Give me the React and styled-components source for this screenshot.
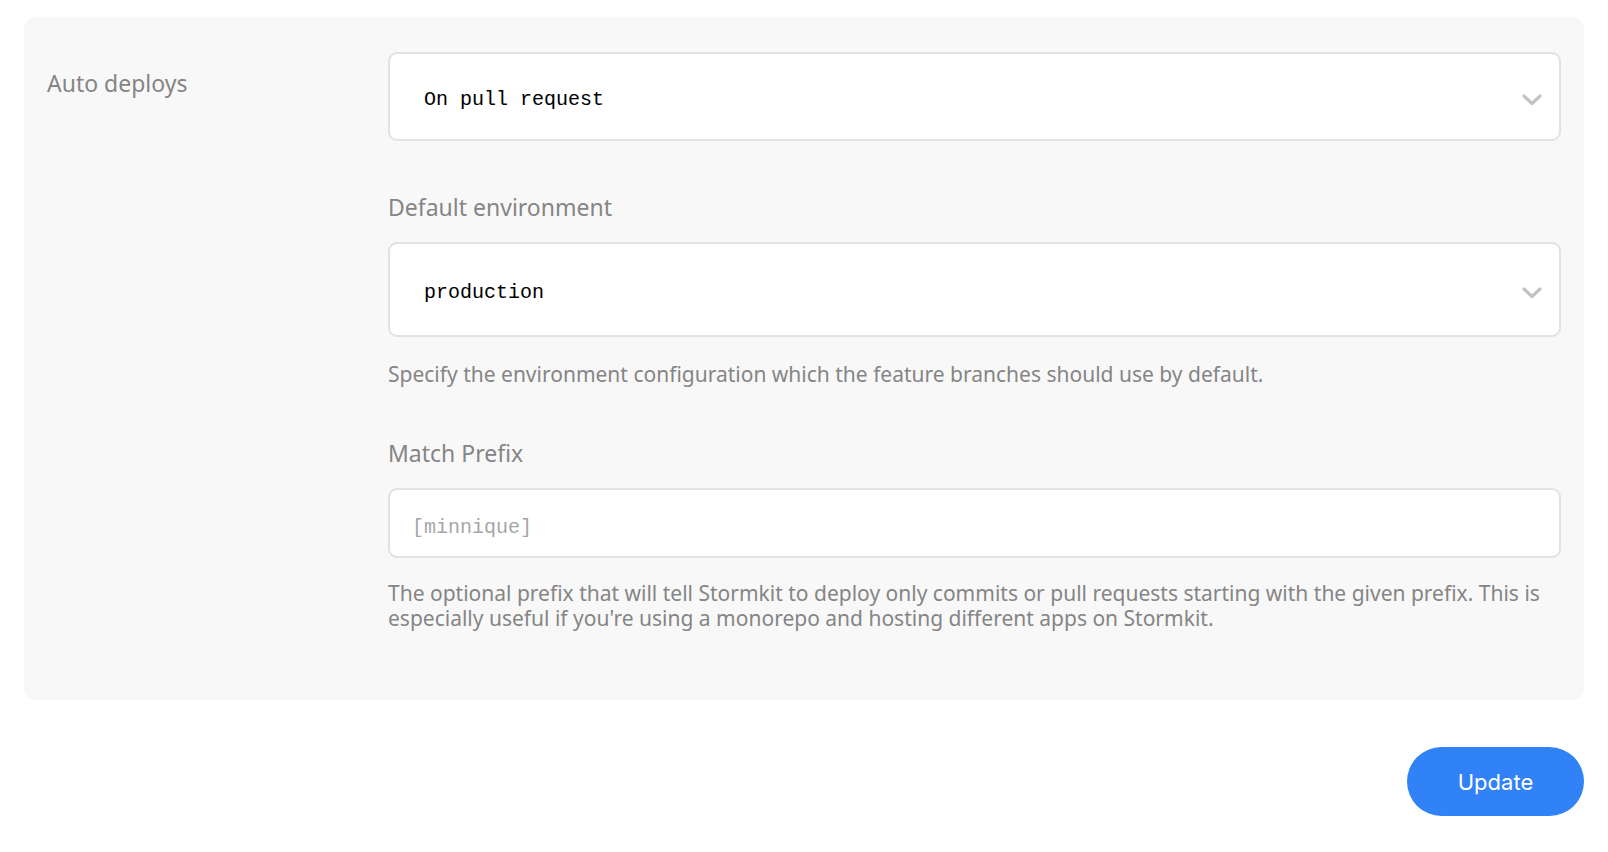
import React from "react";
import styled, { createGlobalStyle } from "styled-components";

const GlobalStyle = createGlobalStyle`
  body {
    margin: 0;
    background: #ffffff;
    font-family: "Noto Sans", "Open Sans", sans-serif;
  }
`;

const Page = styled.div`
  padding: 17px 24px 37px;
`;

const Panel = styled.div`
  display: grid;
  grid-template-columns: 341px 1fr;
  background-color: #f8f8f8;
  border-radius: 12px;
  padding: 35px 23px 69px;
`;

const SideLabel = styled.div`
  margin-top: 16px;
  font-size: 23px;
  line-height: 30px;
  color: #858585;
`;

const Fields = styled.div`
  display: flex;
  flex-direction: column;
`;

const FieldLabel = styled.div`
  margin-top: 51px;
  margin-bottom: 20px;
  font-size: 23px;
  line-height: 30px;
  color: #858585;
`;

const SelectBox = styled.div`
  display: flex;
  align-items: center;
  justify-content: space-between;
  height: ${(p) => p.height}px;
  box-sizing: border-box;
  padding: 6px 16px 0 34px;
  background: #ffffff;
  border: 2px solid #e2e2e2;
  border-radius: 9px;
  font-family: "Liberation Mono", "DejaVu Sans Mono", monospace;
  font-size: 20px;
  color: #000000;
  cursor: pointer;
`;

const TextInput = styled.input`
  display: block;
  width: 100%;
  height: 70px;
  box-sizing: border-box;
  padding: 8px 22px 0;
  background: #ffffff;
  border: 2px solid #e2e2e2;
  border-radius: 9px;
  font-family: "Liberation Mono", "DejaVu Sans Mono", monospace;
  font-size: 20px;
  color: #000000;
  outline: none;

  &::placeholder {
    color: #a6a6a6;
  }
`;

const Help = styled.p`
  margin: ${(p) => p.top}px 0 0;
  font-size: 21px;
  line-height: 25px;
  color: #858585;
`;

const Footer = styled.div`
  display: flex;
  justify-content: flex-end;
  margin-top: 47px;
`;

const UpdateButton = styled.button`
  width: 177px;
  height: 69px;
  border: 0;
  border-radius: 35px;
  background-color: #3182f6;
  color: #ffffff;
  font-family: Inter, "Noto Sans", sans-serif;
  font-size: 22px;
  cursor: pointer;
`;

const Chevron = () => (
  <svg width="22" height="14" viewBox="0 0 22 14" fill="none">
    <polyline
      points="3,3 11,10.5 19,3"
      stroke="#c2c2c2"
      strokeWidth="3.2"
      strokeLinecap="round"
      strokeLinejoin="round"
    />
  </svg>
);

const App = () => {
  return (
    <Page>
      <GlobalStyle />
      <Panel>
        <SideLabel>Auto deploys</SideLabel>
        <Fields>
          <SelectBox height={89}>
            <span>On pull request</span>
            <Chevron />
          </SelectBox>

          <FieldLabel>Default environment</FieldLabel>
          <SelectBox height={95}>
            <span>production</span>
            <Chevron />
          </SelectBox>
          <Help top={25}>
            Specify the environment configuration which the feature branches
            should use by default.
          </Help>

          <FieldLabel>Match Prefix</FieldLabel>
          <TextInput placeholder="[minnique]" />
          <Help top={23}>
            The optional prefix that will tell Stormkit to deploy only commits
            or pull requests starting with the given prefix. This is especially
            useful if you're using a monorepo and hosting different apps on
            Stormkit.
          </Help>
        </Fields>
      </Panel>
      <Footer>
        <UpdateButton>Update</UpdateButton>
      </Footer>
    </Page>
  );
};

export default App;
